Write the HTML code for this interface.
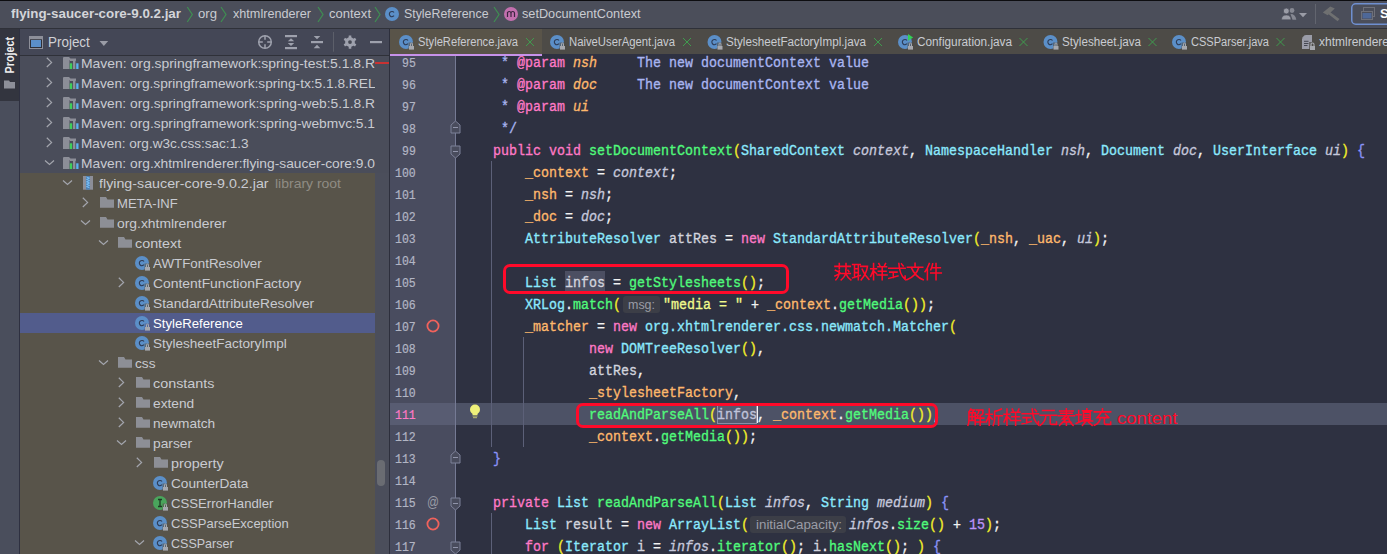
<!DOCTYPE html><html><head><meta charset="utf-8"><style>
*{margin:0;padding:0;box-sizing:border-box}
html,body{width:1387px;height:554px;overflow:hidden;background:#2e3141}
.a{position:absolute;white-space:pre}
.m{-webkit-text-stroke:0.3px currentColor}
svg.a{overflow:visible}
</style></head><body>
<div class="a" style="left:0px;top:0px;width:1387px;height:1px;background:#0d0d10;"></div>
<div class="a" style="left:0px;top:1px;width:1387px;height:27px;background:#4b4e5a;"></div>
<div class="a" style="left:0px;top:28px;width:1387px;height:1px;background:#2f3139;"></div>
<div class="a" style="left:0px;top:29px;width:19px;height:525px;background:#4a4e5c;"></div>
<div class="a" style="left:0px;top:29px;width:19px;height:72px;background:#33353f;"></div>
<div class="a" style="left:19px;top:29px;width:1px;height:525px;background:#2e3040;"></div>
<div class="a" style="left:20px;top:29px;width:369px;height:26px;background:#444756;"></div>
<div class="a" style="left:20px;top:55px;width:369px;height:1px;background:#2f3139;"></div>
<div class="a" style="left:20px;top:56px;width:369px;height:117px;background:#4a4d5a;"></div>
<div class="a" style="left:20px;top:173px;width:355px;height:381px;background:#58544a;"></div>
<div class="a" style="left:375px;top:173px;width:14px;height:381px;background:#4b4e5b;"></div>
<div class="a" style="left:389px;top:29px;width:1px;height:525px;background:#2d2f3c;"></div>
<div class="a" style="left:390px;top:29px;width:997px;height:25px;background:#4d4b47;"></div>
<div class="a" style="left:390px;top:29px;width:152px;height:25px;background:#595449;"></div>
<div class="a" style="left:390px;top:54px;width:152px;height:2px;background:#c792ea;"></div>
<div class="a" style="left:542px;top:54px;width:845px;height:2px;background:#2e3141;"></div>
<div class="a" style="left:390px;top:56px;width:65px;height:498px;background:#494c5f;"></div>
<div class="a" style="left:455px;top:56px;width:1px;height:498px;background:#757a94;"></div>
<div class="a" style="left:377px;top:460px;width:8px;height:26px;background:#6a6c72;border-radius:4px;"></div>
<div class="a" style="left:375px;top:62px;width:14px;height:2px;background:#c83232;"></div>
<div class="a" style="left:390px;top:403px;width:65px;height:22px;background:#585c72;"></div>
<div class="a" style="left:456px;top:403px;width:931px;height:22px;background:#4d5266;"></div>
<svg class="a" style="left:0;top:0" width="1387" height="554"><path d="M187.3,7 L192.3,14.5 L187.3,22" fill="none" stroke="#3f8f52" stroke-width="1.2"/><path d="M221,7 L226,14.5 L221,22" fill="none" stroke="#3f8f52" stroke-width="1.2"/><path d="M318,7 L323,14.5 L318,22" fill="none" stroke="#3f8f52" stroke-width="1.2"/><path d="M375,7 L380,14.5 L375,22" fill="none" stroke="#3f8f52" stroke-width="1.2"/><path d="M494,7 L499,14.5 L494,22" fill="none" stroke="#3f8f52" stroke-width="1.2"/><circle cx="392" cy="14" r="7" fill="#5b8fc8"/><path d="M394,12.5 A2.6,2.6 0 1 0 394,15.7" fill="none" stroke="#2f3d58" stroke-width="1.15"/><circle cx="511" cy="14" r="7" fill="#c26fae"/><path d="M507.5,17 V12 M507.5,13.5 Q507.5,11.5 509.2,11.5 Q511,11.5 511,13.5 V17 M511,13.5 Q511,11.5 512.8,11.5 Q514.5,11.5 514.5,13.5 V17" fill="none" stroke="#3b2540" stroke-width="1.2"/><g fill="#9a9ca6"><circle cx="1292" cy="10.5" r="2.4" opacity="0.75"/><path d="M1290.5,14 Q1295.5,14 1296.3,19.8 L1292.5,19.8 Z" opacity="0.75"/><circle cx="1286.3" cy="11" r="3" stroke="#4b4e5a" stroke-width="0.8"/><path d="M1281.5,19.8 Q1281.5,15 1286.3,15 Q1291,15 1291,19.8 Z" stroke="#4b4e5a" stroke-width="0.6"/><path d="M1299,13 H1307 L1303,17.3 Z"/></g><rect x="1315" y="4" width="1" height="20" fill="#62656f"/><g fill="#6f7071"><path d="M1322.8,12.6 L1330.3,6.6 L1334.8,8.4 L1327.6,15.2 Z"/><path d="M1329.3,11.6 L1339.5,19 L1337.6,21.2 L1327.6,13.4 Z"/></g><rect x="1351.75" y="3.75" width="60" height="20.5" rx="4" fill="none" stroke="#6f8fd0" stroke-width="1.5"/><g><rect x="1363.5" y="7.5" width="11" height="9" fill="none" stroke="#6e7079" stroke-width="1"/><rect x="1361" y="11" width="12" height="9" fill="#4c4f5a"/><rect x="1361.5" y="11.5" width="11" height="8" fill="none" stroke="#6e7079" stroke-width="1"/><rect x="1362.5" y="13" width="9" height="5.5" fill="#4e6898"/></g><text x="0" y="0" transform="translate(14,73.4) rotate(-90)" font-family="Liberation Sans" font-weight="bold" font-size="12" fill="#eeeeee" textLength="36.4" lengthAdjust="spacingAndGlyphs">Project</text><path d="M4,80.5 H9 L10,82 H15 V88.5 H4 Z" fill="#8d8f99"/><rect x="29" y="36" width="14" height="13" fill="#8d8f99"/><rect x="30" y="39.3" width="12" height="8.7" fill="#2e3038"/><rect x="31" y="40" width="10" height="7" fill="#5b8fc9"/><path d="M99.5,41 H108.2 L103.85,45.9 Z" fill="#9a9ca6"/><g stroke="#9ea1ad" stroke-width="1.5" fill="none"><circle cx="265" cy="42" r="6.3"/><path d="M265,35.7 V39.8 M265,44.2 V48.3 M258.7,42 H262.8 M267.2,42 H271.3"/></g><g fill="#9ea1ad"><rect x="285" y="35" width="12" height="2.2"/><rect x="285" y="47" width="12" height="2.2"/><path d="M287.8,41.2 L291,38.2 L294.2,41.2 Z M287.8,43 L291,46 L294.2,43 Z"/></g><g fill="#9ea1ad"><rect x="311" y="41" width="12" height="2.2"/><path d="M313.7,36 H320.3 L317,39.2 Z M313.7,48.2 H320.3 L317,44.8 Z"/></g><rect x="333" y="32" width="1" height="19.7" fill="#5c5f6a"/><g fill="#9ea1ad"><circle cx="350" cy="42.1" r="4.9"/><g stroke="#9ea1ad" stroke-width="2.6"><path d="M350,35.5 V48.7 M344.3,38.8 L355.7,45.4 M344.3,45.4 L355.7,38.8"/></g><circle cx="350" cy="42.1" r="1.9" fill="#454853"/></g><rect x="370" y="41" width="12" height="2.2" fill="#9ea1ad"/><circle cx="406" cy="42" r="7" fill="#5b8fc8"/><path d="M408,40.5 A2.6,2.6 0 1 0 408,43.7" fill="none" stroke="#2f3d58" stroke-width="1.15"/><rect x="408.5" y="42.5" width="6" height="7" fill="#595449" opacity="0.6"/><path d="M410.5,46 V44 A1,1 0 0 1 412.5,44 V46" fill="none" stroke="#a6a8ae" stroke-width="1"/><rect x="409" y="46" width="5" height="3.6" fill="#a6a8ae"/><circle cx="557" cy="42" r="7" fill="#5b8fc8"/><path d="M559,40.5 A2.6,2.6 0 1 0 559,43.7" fill="none" stroke="#2f3d58" stroke-width="1.15"/><rect x="559.5" y="42.5" width="6" height="7" fill="#4d4b47" opacity="0.6"/><path d="M561.5,46 V44 A1,1 0 0 1 563.5,44 V46" fill="none" stroke="#a6a8ae" stroke-width="1"/><rect x="560" y="46" width="5" height="3.6" fill="#a6a8ae"/><circle cx="714.5" cy="42" r="7" fill="#5b8fc8"/><path d="M716.5,40.5 A2.6,2.6 0 1 0 716.5,43.7" fill="none" stroke="#2f3d58" stroke-width="1.15"/><rect x="717.0" y="42.5" width="6" height="7" fill="#4d4b47" opacity="0.6"/><path d="M719.0,46 V44 A1,1 0 0 1 721.0,44 V46" fill="none" stroke="#a6a8ae" stroke-width="1"/><rect x="717.5" y="46" width="5" height="3.6" fill="#a6a8ae"/><circle cx="905" cy="42" r="7" fill="#5b8fc8"/><path d="M907,40.5 A2.6,2.6 0 1 0 907,43.7" fill="none" stroke="#2f3d58" stroke-width="1.15"/><rect x="907.5" y="42.5" width="6" height="7" fill="#4d4b47" opacity="0.6"/><path d="M909.5,46 V44 A1,1 0 0 1 911.5,44 V46" fill="none" stroke="#a6a8ae" stroke-width="1"/><rect x="908" y="46" width="5" height="3.6" fill="#a6a8ae"/><circle cx="1050.5" cy="42" r="7" fill="#5b8fc8"/><path d="M1052.5,40.5 A2.6,2.6 0 1 0 1052.5,43.7" fill="none" stroke="#2f3d58" stroke-width="1.15"/><rect x="1053.0" y="42.5" width="6" height="7" fill="#4d4b47" opacity="0.6"/><path d="M1055.0,46 V44 A1,1 0 0 1 1057.0,44 V46" fill="none" stroke="#a6a8ae" stroke-width="1"/><rect x="1053.5" y="46" width="5" height="3.6" fill="#a6a8ae"/><circle cx="1179" cy="42" r="7" fill="#5b8fc8"/><path d="M1181,40.5 A2.6,2.6 0 1 0 1181,43.7" fill="none" stroke="#2f3d58" stroke-width="1.15"/><rect x="1181.5" y="42.5" width="6" height="7" fill="#4d4b47" opacity="0.6"/><path d="M1183.5,46 V44 A1,1 0 0 1 1185.5,44 V46" fill="none" stroke="#a6a8ae" stroke-width="1"/><rect x="1182" y="46" width="5" height="3.6" fill="#a6a8ae"/><path d="M908,33.9 L913.2,37.4 L908,40.8 Z" fill="#33d155"/><path d="M526,38 L534,46 M534,38 L526,46" stroke="#3f9c4e" stroke-width="1"/><path d="M683,38 L691,46 M691,38 L683,46" stroke="#3f9c4e" stroke-width="1"/><path d="M874,38 L882,46 M882,38 L874,46" stroke="#3f9c4e" stroke-width="1"/><path d="M1019.5,38 L1027.5,46 M1027.5,38 L1019.5,46" stroke="#3f9c4e" stroke-width="1"/><path d="M1148.5,38 L1156.5,46 M1156.5,38 L1148.5,46" stroke="#3f9c4e" stroke-width="1"/><path d="M1276.5,38 L1284.5,46 M1284.5,38 L1276.5,46" stroke="#3f9c4e" stroke-width="1"/><path d="M1305.5,35 H1312 V49 H1302 V38.5 Z" fill="#9a9ca8"/><path d="M1302,37.8 L1305,35 V38 Z" fill="#9a9ca8"/><path d="M1304,41.3 H1308.5 M1304,43.5 H1308.5 M1304,45.5 H1307.5" stroke="#3c3e48" stroke-width="0.9"/><rect x="1309" y="42" width="7" height="9" fill="#4d4b47" opacity="0.7"/><path d="M1311,46 V44.5 A1.5,1.5 0 0 1 1314,44.5 V46" fill="none" stroke="#a6a8ae" stroke-width="1.1"/><rect x="1310" y="46" width="5" height="4" fill="#a6a8ae"/><path d="M455.5,121 L460.0,125 V133 H451.0 V125 Z" fill="#494c5d" stroke="#7d8199" stroke-width="1"/><path d="M453.0,127.5 H458.0" stroke="#9094aa" stroke-width="1"/><path d="M451.0,146 H460.0 V154 L455.5,158 L451.0,154 Z" fill="#494c5d" stroke="#7d8199" stroke-width="1"/><path d="M453.0,151.5 H458.0" stroke="#9094aa" stroke-width="1"/><path d="M455.5,451 L460.0,455 V463 H451.0 V455 Z" fill="#494c5d" stroke="#7d8199" stroke-width="1"/><path d="M453.0,457.5 H458.0" stroke="#9094aa" stroke-width="1"/><path d="M451.0,498 H460.0 V506 L455.5,510 L451.0,506 Z" fill="#494c5d" stroke="#7d8199" stroke-width="1"/><path d="M453.0,503.5 H458.0" stroke="#9094aa" stroke-width="1"/><path d="M451.0,542 H460.0 V550 L455.5,554 L451.0,550 Z" fill="#494c5d" stroke="#7d8199" stroke-width="1"/><path d="M453.0,547.5 H458.0" stroke="#9094aa" stroke-width="1"/><circle cx="433" cy="326" r="5.6" fill="none" stroke="#f0625c" stroke-width="1.8"/><circle cx="433" cy="524" r="5.6" fill="none" stroke="#f0625c" stroke-width="1.8"/><text x="427" y="507" font-family="Liberation Sans" font-size="14" fill="#9a9ca6" textLength="12" lengthAdjust="spacingAndGlyphs">@</text><g fill="#eef07a"><circle cx="475" cy="409.5" r="5"/><rect x="472.5" y="412" width="5" height="3"/></g><path d="M472.5,416 H477.5 M473,417.7 H477" stroke="#c8ca70" stroke-width="0.9"/><rect x="491" y="161" width="1" height="286" fill="#5c6078"/><rect x="523" y="337" width="1" height="110" fill="#5c6078"/><rect x="491" y="513" width="1" height="41" fill="#5c6078"/></svg>
<div class="a" style="left:11.00px;top:6.87px;font-family:'Liberation Sans';font-size:13.5px;line-height:13.5px;color:#d4d5d9;font-weight:bold;transform:scale(0.9894,1.0);transform-origin:0 11.43px;">flying-saucer-core-9.0.2.jar</div>
<div class="a" style="left:197.50px;top:6.87px;font-family:'Liberation Sans';font-size:13.5px;line-height:13.5px;color:#c9cbd1;font-weight:normal;transform:scale(0.9738,1.0);transform-origin:0 11.43px;">org</div>
<div class="a" style="left:233.00px;top:6.87px;font-family:'Liberation Sans';font-size:13.5px;line-height:13.5px;color:#c9cbd1;font-weight:normal;transform:scale(0.9366,1.0);transform-origin:0 11.43px;">xhtmlrenderer</div>
<div class="a" style="left:329.00px;top:6.87px;font-family:'Liberation Sans';font-size:13.5px;line-height:13.5px;color:#c9cbd1;font-weight:normal;transform:scale(0.9649,1.0);transform-origin:0 11.43px;">context</div>
<div class="a" style="left:403.50px;top:6.87px;font-family:'Liberation Sans';font-size:13.5px;line-height:13.5px;color:#c9cbd1;font-weight:normal;transform:scale(0.9155,1.0);transform-origin:0 11.43px;">StyleReference</div>
<div class="a" style="left:522.00px;top:6.87px;font-family:'Liberation Sans';font-size:13.5px;line-height:13.5px;color:#c9cbd1;font-weight:normal;transform:scale(0.9408,1.0);transform-origin:0 11.43px;">setDocumentContext</div>
<div class="a" style="left:1380.00px;top:6.99px;font-family:'Liberation Sans';font-size:13px;line-height:13px;color:#ffffff;font-weight:bold;">S</div>
<div class="a" style="left:48.40px;top:34.89px;font-family:'Liberation Sans';font-size:14.3px;line-height:14.3px;color:#d0d1d5;font-weight:normal;transform:scale(0.9394,1.0);transform-origin:0 12.11px;">Project</div>
<div class="a" style="left:20px;top:56px;width:355px;height:498px;overflow:hidden;">
<div class="a" style="left:0px;top:257px;width:356px;height:20px;background:#525c8c;"></div>
<div class="a" style="left:61.00px;top:0.65px;font-family:'Liberation Sans';font-size:13.4px;line-height:13.4px;color:#c9cbd1;font-weight:normal;transform:scale(1.0396,1.0);transform-origin:0 11.35px;">Maven: org.springframework:spring-test:5.1.8.RELEASE</div>
<div class="a" style="left:61.00px;top:20.65px;font-family:'Liberation Sans';font-size:13.4px;line-height:13.4px;color:#c9cbd1;font-weight:normal;transform:scale(1.0225,1.0);transform-origin:0 11.35px;">Maven: org.springframework:spring-tx:5.1.8.RELEASE</div>
<div class="a" style="left:61.00px;top:40.65px;font-family:'Liberation Sans';font-size:13.4px;line-height:13.4px;color:#c9cbd1;font-weight:normal;transform:scale(1.0287,1.0);transform-origin:0 11.35px;">Maven: org.springframework:spring-web:5.1.8.RELEASE</div>
<div class="a" style="left:61.00px;top:60.65px;font-family:'Liberation Sans';font-size:13.4px;line-height:13.4px;color:#c9cbd1;font-weight:normal;transform:scale(1.0288,1.0);transform-origin:0 11.35px;">Maven: org.springframework:spring-webmvc:5.1.8.RELEASE</div>
<div class="a" style="left:61.00px;top:80.65px;font-family:'Liberation Sans';font-size:13.4px;line-height:13.4px;color:#c9cbd1;font-weight:normal;transform:scale(1.0138,1.0);transform-origin:0 11.35px;">Maven: org.w3c.css:sac:1.3</div>
<div class="a" style="left:61.00px;top:100.65px;font-family:'Liberation Sans';font-size:13.4px;line-height:13.4px;color:#c9cbd1;font-weight:normal;transform:scale(1.0287,1.0);transform-origin:0 11.35px;">Maven: org.xhtmlrenderer:flying-saucer-core:9.0.2</div>
<div class="a" style="left:79.00px;top:120.65px;font-family:'Liberation Sans';font-size:13.4px;line-height:13.4px;color:#c9cbd1;font-weight:normal;transform:scale(1.0649,1.0);transform-origin:0 11.35px;">flying-saucer-core-9.0.2.jar</div>
<div class="a" style="left:255.00px;top:120.65px;font-family:'Liberation Sans';font-size:13.4px;line-height:13.4px;color:#8f8c84;font-weight:normal;transform:scale(1.0434,1.0);transform-origin:0 11.35px;">library root</div>
<div class="a" style="left:97.00px;top:140.65px;font-family:'Liberation Sans';font-size:13.4px;line-height:13.4px;color:#c9cbd1;font-weight:normal;transform:scale(0.9754,1.0);transform-origin:0 11.35px;">META-INF</div>
<div class="a" style="left:97.00px;top:160.65px;font-family:'Liberation Sans';font-size:13.4px;line-height:13.4px;color:#c9cbd1;font-weight:normal;transform:scale(1.0352,1.0);transform-origin:0 11.35px;">org.xhtmlrenderer</div>
<div class="a" style="left:115.00px;top:180.65px;font-family:'Liberation Sans';font-size:13.4px;line-height:13.4px;color:#c9cbd1;font-weight:normal;transform:scale(1.0701,1.0);transform-origin:0 11.35px;">context</div>
<div class="a" style="left:133.00px;top:200.65px;font-family:'Liberation Sans';font-size:13.4px;line-height:13.4px;color:#c9cbd1;font-weight:normal;transform:scale(0.9983,1.0);transform-origin:0 11.35px;">AWTFontResolver</div>
<div class="a" style="left:133.00px;top:220.65px;font-family:'Liberation Sans';font-size:13.4px;line-height:13.4px;color:#c9cbd1;font-weight:normal;transform:scale(1.0371,1.0);transform-origin:0 11.35px;">ContentFunctionFactory</div>
<div class="a" style="left:133.00px;top:240.65px;font-family:'Liberation Sans';font-size:13.4px;line-height:13.4px;color:#c9cbd1;font-weight:normal;transform:scale(1.0264,1.0);transform-origin:0 11.35px;">StandardAttributeResolver</div>
<div class="a" style="left:133.00px;top:260.65px;font-family:'Liberation Sans';font-size:13.4px;line-height:13.4px;color:#ffffff;font-weight:normal;transform:scale(0.9820,1.0);transform-origin:0 11.35px;">StyleReference</div>
<div class="a" style="left:133.00px;top:280.65px;font-family:'Liberation Sans';font-size:13.4px;line-height:13.4px;color:#c9cbd1;font-weight:normal;transform:scale(1.0101,1.0);transform-origin:0 11.35px;">StylesheetFactoryImpl</div>
<div class="a" style="left:115.00px;top:300.65px;font-family:'Liberation Sans';font-size:13.4px;line-height:13.4px;color:#c9cbd1;font-weight:normal;transform:scale(1.0206,1.0);transform-origin:0 11.35px;">css</div>
<div class="a" style="left:133.00px;top:320.65px;font-family:'Liberation Sans';font-size:13.4px;line-height:13.4px;color:#c9cbd1;font-weight:normal;transform:scale(1.0713,1.0);transform-origin:0 11.35px;">constants</div>
<div class="a" style="left:133.00px;top:340.65px;font-family:'Liberation Sans';font-size:13.4px;line-height:13.4px;color:#c9cbd1;font-weight:normal;transform:scale(1.0248,1.0);transform-origin:0 11.35px;">extend</div>
<div class="a" style="left:133.00px;top:360.65px;font-family:'Liberation Sans';font-size:13.4px;line-height:13.4px;color:#c9cbd1;font-weight:normal;transform:scale(1.0192,1.0);transform-origin:0 11.35px;">newmatch</div>
<div class="a" style="left:133.00px;top:380.65px;font-family:'Liberation Sans';font-size:13.4px;line-height:13.4px;color:#c9cbd1;font-weight:normal;transform:scale(1.0275,1.0);transform-origin:0 11.35px;">parser</div>
<div class="a" style="left:151.00px;top:400.65px;font-family:'Liberation Sans';font-size:13.4px;line-height:13.4px;color:#c9cbd1;font-weight:normal;transform:scale(1.0728,1.0);transform-origin:0 11.35px;">property</div>
<div class="a" style="left:151.00px;top:420.65px;font-family:'Liberation Sans';font-size:13.4px;line-height:13.4px;color:#c9cbd1;font-weight:normal;transform:scale(1.0181,1.0);transform-origin:0 11.35px;">CounterData</div>
<div class="a" style="left:151.00px;top:440.65px;font-family:'Liberation Sans';font-size:13.4px;line-height:13.4px;color:#c9cbd1;font-weight:normal;transform:scale(0.9829,1.0);transform-origin:0 11.35px;">CSSErrorHandler</div>
<div class="a" style="left:151.00px;top:460.65px;font-family:'Liberation Sans';font-size:13.4px;line-height:13.4px;color:#c9cbd1;font-weight:normal;transform:scale(0.9710,1.0);transform-origin:0 11.35px;">CSSParseException</div>
<div class="a" style="left:151.00px;top:480.65px;font-family:'Liberation Sans';font-size:13.4px;line-height:13.4px;color:#c9cbd1;font-weight:normal;transform:scale(0.9347,1.0);transform-origin:0 11.35px;">CSSParser</div>
<svg class="a" style="left:-20px;top:-56px" width="1387" height="554"><path d="M46.8,57.8 L51.6,62.4 L46.8,67" fill="none" stroke="#a3a5ad" stroke-width="1.2"/><path d="M63,58 Q63,57 64,57 H69 L70.5,58.5 H76 V69 H63 Z" fill="#8c8e98"/><rect x="69.5" y="60" width="9" height="9" fill="#4a4d5a"/><rect x="69.8" y="63.3" width="2.4" height="5.7" fill="#3fce5a"/><rect x="73" y="60" width="2.4" height="9" fill="#8c8e98"/><rect x="76.2" y="63.3" width="2.3" height="5.7" fill="#5ab2f2"/><rect x="69.8" y="60" width="6" height="1" fill="#8c8e98"/><path d="M46.8,77.8 L51.6,82.4 L46.8,87" fill="none" stroke="#a3a5ad" stroke-width="1.2"/><path d="M63,78 Q63,77 64,77 H69 L70.5,78.5 H76 V89 H63 Z" fill="#8c8e98"/><rect x="69.5" y="80" width="9" height="9" fill="#4a4d5a"/><rect x="69.8" y="83.3" width="2.4" height="5.7" fill="#3fce5a"/><rect x="73" y="80" width="2.4" height="9" fill="#8c8e98"/><rect x="76.2" y="83.3" width="2.3" height="5.7" fill="#5ab2f2"/><rect x="69.8" y="80" width="6" height="1" fill="#8c8e98"/><path d="M46.8,97.8 L51.6,102.4 L46.8,107" fill="none" stroke="#a3a5ad" stroke-width="1.2"/><path d="M63,98 Q63,97 64,97 H69 L70.5,98.5 H76 V109 H63 Z" fill="#8c8e98"/><rect x="69.5" y="100" width="9" height="9" fill="#4a4d5a"/><rect x="69.8" y="103.3" width="2.4" height="5.7" fill="#3fce5a"/><rect x="73" y="100" width="2.4" height="9" fill="#8c8e98"/><rect x="76.2" y="103.3" width="2.3" height="5.7" fill="#5ab2f2"/><rect x="69.8" y="100" width="6" height="1" fill="#8c8e98"/><path d="M46.8,117.8 L51.6,122.4 L46.8,127" fill="none" stroke="#a3a5ad" stroke-width="1.2"/><path d="M63,118 Q63,117 64,117 H69 L70.5,118.5 H76 V129 H63 Z" fill="#8c8e98"/><rect x="69.5" y="120" width="9" height="9" fill="#4a4d5a"/><rect x="69.8" y="123.3" width="2.4" height="5.7" fill="#3fce5a"/><rect x="73" y="120" width="2.4" height="9" fill="#8c8e98"/><rect x="76.2" y="123.3" width="2.3" height="5.7" fill="#5ab2f2"/><rect x="69.8" y="120" width="6" height="1" fill="#8c8e98"/><path d="M46.8,137.8 L51.6,142.4 L46.8,147" fill="none" stroke="#a3a5ad" stroke-width="1.2"/><path d="M63,138 Q63,137 64,137 H69 L70.5,138.5 H76 V149 H63 Z" fill="#8c8e98"/><rect x="69.5" y="140" width="9" height="9" fill="#4a4d5a"/><rect x="69.8" y="143.3" width="2.4" height="5.7" fill="#3fce5a"/><rect x="73" y="140" width="2.4" height="9" fill="#8c8e98"/><rect x="76.2" y="143.3" width="2.3" height="5.7" fill="#5ab2f2"/><rect x="69.8" y="140" width="6" height="1" fill="#8c8e98"/><path d="M45,160.5 L49.5,164.5 L54,160.5" fill="none" stroke="#a3a5ad" stroke-width="1.2"/><path d="M63,158 Q63,157 64,157 H69 L70.5,158.5 H76 V169 H63 Z" fill="#8c8e98"/><rect x="69.5" y="160" width="9" height="9" fill="#4a4d5a"/><rect x="69.8" y="163.3" width="2.4" height="5.7" fill="#3fce5a"/><rect x="73" y="160" width="2.4" height="9" fill="#8c8e98"/><rect x="76.2" y="163.3" width="2.3" height="5.7" fill="#5ab2f2"/><rect x="69.8" y="160" width="6" height="1" fill="#8c8e98"/><path d="M63,180.5 L67.5,184.5 L72,180.5" fill="none" stroke="#a3a5ad" stroke-width="1.2"/><rect x="83" y="176" width="10" height="13.7" fill="#8c8e98"/><rect x="86" y="176" width="4" height="13.7" fill="#4f7fb0"/><path d="M86.5,177 L89.5,178.2 L86.5,179.4 L89.5,180.6 L86.5,181.8 L89.5,183 L86.5,184.2 L89.5,185.4 L86.5,186.6 L89.5,187.8" fill="none" stroke="#7cc6ff" stroke-width="0.9"/><path d="M82.8,197.8 L87.6,202.4 L82.8,207" fill="none" stroke="#a3a5ad" stroke-width="1.2"/><path d="M100,197 H106 L107.5,199.5 H114 V207.8 H100 Z" fill="#8d8f96"/><path d="M81,220.5 L85.5,224.5 L90,220.5" fill="none" stroke="#a3a5ad" stroke-width="1.2"/><path d="M100,217 H106 L107.5,219.5 H114 V227.8 H100 Z" fill="#8d8f96"/><path d="M99,240.5 L103.5,244.5 L108,240.5" fill="none" stroke="#a3a5ad" stroke-width="1.2"/><path d="M118,237 H124 L125.5,239.5 H132 V247.8 H118 Z" fill="#8d8f96"/><circle cx="142" cy="263" r="7" fill="#5b8fc8"/><path d="M144,261.5 A2.6,2.6 0 1 0 144,264.7" fill="none" stroke="#2f3d58" stroke-width="1.15"/><rect x="144.5" y="263.5" width="6" height="7" fill="#58544a" opacity="0.6"/><path d="M146.5,267 V265 A1,1 0 0 1 148.5,265 V267" fill="none" stroke="#a6a8ae" stroke-width="1"/><rect x="145" y="267" width="5" height="3.6" fill="#a6a8ae"/><path d="M118.8,277.8 L123.6,282.4 L118.8,287" fill="none" stroke="#a3a5ad" stroke-width="1.2"/><circle cx="142" cy="283" r="7" fill="#5b8fc8"/><path d="M144,281.5 A2.6,2.6 0 1 0 144,284.7" fill="none" stroke="#2f3d58" stroke-width="1.15"/><rect x="144.5" y="283.5" width="6" height="7" fill="#58544a" opacity="0.6"/><path d="M146.5,287 V285 A1,1 0 0 1 148.5,285 V287" fill="none" stroke="#a6a8ae" stroke-width="1"/><rect x="145" y="287" width="5" height="3.6" fill="#a6a8ae"/><circle cx="142" cy="303" r="7" fill="#5b8fc8"/><path d="M144,301.5 A2.6,2.6 0 1 0 144,304.7" fill="none" stroke="#2f3d58" stroke-width="1.15"/><rect x="144.5" y="303.5" width="6" height="7" fill="#58544a" opacity="0.6"/><path d="M146.5,307 V305 A1,1 0 0 1 148.5,305 V307" fill="none" stroke="#a6a8ae" stroke-width="1"/><rect x="145" y="307" width="5" height="3.6" fill="#a6a8ae"/><circle cx="142" cy="323" r="7" fill="#5b8fc8"/><path d="M144,321.5 A2.6,2.6 0 1 0 144,324.7" fill="none" stroke="#2f3d58" stroke-width="1.15"/><rect x="144.5" y="323.5" width="6" height="7" fill="#525c8c" opacity="0.6"/><path d="M146.5,327 V325 A1,1 0 0 1 148.5,325 V327" fill="none" stroke="#a6a8ae" stroke-width="1"/><rect x="145" y="327" width="5" height="3.6" fill="#a6a8ae"/><circle cx="142" cy="343" r="7" fill="#5b8fc8"/><path d="M144,341.5 A2.6,2.6 0 1 0 144,344.7" fill="none" stroke="#2f3d58" stroke-width="1.15"/><rect x="144.5" y="343.5" width="6" height="7" fill="#58544a" opacity="0.6"/><path d="M146.5,347 V345 A1,1 0 0 1 148.5,345 V347" fill="none" stroke="#a6a8ae" stroke-width="1"/><rect x="145" y="347" width="5" height="3.6" fill="#a6a8ae"/><path d="M99,360.5 L103.5,364.5 L108,360.5" fill="none" stroke="#a3a5ad" stroke-width="1.2"/><path d="M118,357 H124 L125.5,359.5 H132 V367.8 H118 Z" fill="#8d8f96"/><path d="M118.8,377.8 L123.6,382.4 L118.8,387" fill="none" stroke="#a3a5ad" stroke-width="1.2"/><path d="M136,377 H142 L143.5,379.5 H150 V387.8 H136 Z" fill="#8d8f96"/><path d="M118.8,397.8 L123.6,402.4 L118.8,407" fill="none" stroke="#a3a5ad" stroke-width="1.2"/><path d="M136,397 H142 L143.5,399.5 H150 V407.8 H136 Z" fill="#8d8f96"/><path d="M118.8,417.8 L123.6,422.4 L118.8,427" fill="none" stroke="#a3a5ad" stroke-width="1.2"/><path d="M136,417 H142 L143.5,419.5 H150 V427.8 H136 Z" fill="#8d8f96"/><path d="M117,440.5 L121.5,444.5 L126,440.5" fill="none" stroke="#a3a5ad" stroke-width="1.2"/><path d="M136,437 H142 L143.5,439.5 H150 V447.8 H136 Z" fill="#8d8f96"/><path d="M136.8,457.8 L141.6,462.4 L136.8,467" fill="none" stroke="#a3a5ad" stroke-width="1.2"/><path d="M154,457 H160 L161.5,459.5 H168 V467.8 H154 Z" fill="#8d8f96"/><circle cx="160" cy="483" r="7" fill="#5b8fc8"/><path d="M162,481.5 A2.6,2.6 0 1 0 162,484.7" fill="none" stroke="#2f3d58" stroke-width="1.15"/><rect x="162.5" y="483.5" width="6" height="7" fill="#58544a" opacity="0.6"/><path d="M164.5,487 V485 A1,1 0 0 1 166.5,485 V487" fill="none" stroke="#a6a8ae" stroke-width="1"/><rect x="163" y="487" width="5" height="3.6" fill="#a6a8ae"/><circle cx="160" cy="503" r="7" fill="#4aa55c"/><path d="M158,499.5 H162 M160,499.5 V506.5 M158,506.5 H162" fill="none" stroke="#1f3a25" stroke-width="1.3"/><rect x="162.5" y="503.5" width="6" height="7" fill="#58544a" opacity="0.6"/><path d="M164.5,507 V505 A1,1 0 0 1 166.5,505 V507" fill="none" stroke="#a6a8ae" stroke-width="1"/><rect x="163" y="507" width="5" height="3.6" fill="#a6a8ae"/><circle cx="160" cy="523" r="7" fill="#5b8fc8"/><path d="M162,521.5 A2.6,2.6 0 1 0 162,524.7" fill="none" stroke="#2f3d58" stroke-width="1.15"/><rect x="162.5" y="523.5" width="6" height="7" fill="#58544a" opacity="0.6"/><path d="M164.5,527 V525 A1,1 0 0 1 166.5,525 V527" fill="none" stroke="#a6a8ae" stroke-width="1"/><rect x="163" y="527" width="5" height="3.6" fill="#a6a8ae"/><path d="M135,540.5 L139.5,544.5 L144,540.5" fill="none" stroke="#a3a5ad" stroke-width="1.2"/><circle cx="160" cy="543" r="7" fill="#5b8fc8"/><path d="M162,541.5 A2.6,2.6 0 1 0 162,544.7" fill="none" stroke="#2f3d58" stroke-width="1.15"/><rect x="162.5" y="543.5" width="6" height="7" fill="#58544a" opacity="0.6"/><path d="M164.5,547 V545 A1,1 0 0 1 166.5,545 V547" fill="none" stroke="#a6a8ae" stroke-width="1"/><rect x="163" y="547" width="5" height="3.6" fill="#a6a8ae"/></svg>
</div>
<div class="a" style="left:418.00px;top:35.84px;font-family:'Liberation Sans';font-size:12px;line-height:12px;color:#c9cbd1;font-weight:normal;transform:scale(0.9312,1.0);transform-origin:0 10.16px;">StyleReference.java</div>
<div class="a" style="left:569.00px;top:35.84px;font-family:'Liberation Sans';font-size:12px;line-height:12px;color:#c9cbd1;font-weight:normal;transform:scale(0.9404,1.0);transform-origin:0 10.16px;">NaiveUserAgent.java</div>
<div class="a" style="left:726.00px;top:35.84px;font-family:'Liberation Sans';font-size:12px;line-height:12px;color:#c9cbd1;font-weight:normal;transform:scale(0.9718,1.0);transform-origin:0 10.16px;">StylesheetFactoryImpl.java</div>
<div class="a" style="left:917.00px;top:35.84px;font-family:'Liberation Sans';font-size:12px;line-height:12px;color:#c9cbd1;font-weight:normal;transform:scale(0.9822,1.0);transform-origin:0 10.16px;">Configuration.java</div>
<div class="a" style="left:1062.00px;top:35.84px;font-family:'Liberation Sans';font-size:12px;line-height:12px;color:#c9cbd1;font-weight:normal;transform:scale(0.9707,1.0);transform-origin:0 10.16px;">Stylesheet.java</div>
<div class="a" style="left:1191.00px;top:35.84px;font-family:'Liberation Sans';font-size:12px;line-height:12px;color:#c9cbd1;font-weight:normal;transform:scale(0.9209,1.0);transform-origin:0 10.16px;">CSSParser.java</div>
<div class="a" style="left:1319.00px;top:35.84px;font-family:'Liberation Sans';font-size:12px;line-height:12px;color:#c9cbd1;font-weight:normal;">xhtmlrenderer.iml</div>
<div class="a" style="left:401.70px;top:57.92px;font-family:'Liberation Mono';font-size:12.5px;line-height:12.5px;color:#b2b5c4;font-weight:normal;transform:scale(0.9199,1.0);transform-origin:0 9.58px;-webkit-text-stroke:0.2px currentColor;">95</div>
<div class="a" style="left:401.70px;top:79.92px;font-family:'Liberation Mono';font-size:12.5px;line-height:12.5px;color:#b2b5c4;font-weight:normal;transform:scale(0.9199,1.0);transform-origin:0 9.58px;-webkit-text-stroke:0.2px currentColor;">96</div>
<div class="a" style="left:401.70px;top:101.92px;font-family:'Liberation Mono';font-size:12.5px;line-height:12.5px;color:#b2b5c4;font-weight:normal;transform:scale(0.9199,1.0);transform-origin:0 9.58px;-webkit-text-stroke:0.2px currentColor;">97</div>
<div class="a" style="left:401.70px;top:123.92px;font-family:'Liberation Mono';font-size:12.5px;line-height:12.5px;color:#b2b5c4;font-weight:normal;transform:scale(0.9199,1.0);transform-origin:0 9.58px;-webkit-text-stroke:0.2px currentColor;">98</div>
<div class="a" style="left:401.70px;top:145.92px;font-family:'Liberation Mono';font-size:12.5px;line-height:12.5px;color:#b2b5c4;font-weight:normal;transform:scale(0.9199,1.0);transform-origin:0 9.58px;-webkit-text-stroke:0.2px currentColor;">99</div>
<div class="a" style="left:394.80px;top:167.92px;font-family:'Liberation Mono';font-size:12.5px;line-height:12.5px;color:#b2b5c4;font-weight:normal;transform:scale(0.9199,1.0);transform-origin:0 9.58px;-webkit-text-stroke:0.2px currentColor;">100</div>
<div class="a" style="left:394.80px;top:189.92px;font-family:'Liberation Mono';font-size:12.5px;line-height:12.5px;color:#b2b5c4;font-weight:normal;transform:scale(0.9199,1.0);transform-origin:0 9.58px;-webkit-text-stroke:0.2px currentColor;">101</div>
<div class="a" style="left:394.80px;top:211.92px;font-family:'Liberation Mono';font-size:12.5px;line-height:12.5px;color:#b2b5c4;font-weight:normal;transform:scale(0.9199,1.0);transform-origin:0 9.58px;-webkit-text-stroke:0.2px currentColor;">102</div>
<div class="a" style="left:394.80px;top:233.92px;font-family:'Liberation Mono';font-size:12.5px;line-height:12.5px;color:#b2b5c4;font-weight:normal;transform:scale(0.9199,1.0);transform-origin:0 9.58px;-webkit-text-stroke:0.2px currentColor;">103</div>
<div class="a" style="left:394.80px;top:255.92px;font-family:'Liberation Mono';font-size:12.5px;line-height:12.5px;color:#b2b5c4;font-weight:normal;transform:scale(0.9199,1.0);transform-origin:0 9.58px;-webkit-text-stroke:0.2px currentColor;">104</div>
<div class="a" style="left:394.80px;top:277.92px;font-family:'Liberation Mono';font-size:12.5px;line-height:12.5px;color:#b2b5c4;font-weight:normal;transform:scale(0.9199,1.0);transform-origin:0 9.58px;-webkit-text-stroke:0.2px currentColor;">105</div>
<div class="a" style="left:394.80px;top:299.92px;font-family:'Liberation Mono';font-size:12.5px;line-height:12.5px;color:#b2b5c4;font-weight:normal;transform:scale(0.9199,1.0);transform-origin:0 9.58px;-webkit-text-stroke:0.2px currentColor;">106</div>
<div class="a" style="left:394.80px;top:321.92px;font-family:'Liberation Mono';font-size:12.5px;line-height:12.5px;color:#b2b5c4;font-weight:normal;transform:scale(0.9199,1.0);transform-origin:0 9.58px;-webkit-text-stroke:0.2px currentColor;">107</div>
<div class="a" style="left:394.80px;top:343.92px;font-family:'Liberation Mono';font-size:12.5px;line-height:12.5px;color:#b2b5c4;font-weight:normal;transform:scale(0.9199,1.0);transform-origin:0 9.58px;-webkit-text-stroke:0.2px currentColor;">108</div>
<div class="a" style="left:394.80px;top:365.92px;font-family:'Liberation Mono';font-size:12.5px;line-height:12.5px;color:#b2b5c4;font-weight:normal;transform:scale(0.9199,1.0);transform-origin:0 9.58px;-webkit-text-stroke:0.2px currentColor;">109</div>
<div class="a" style="left:394.80px;top:387.92px;font-family:'Liberation Mono';font-size:12.5px;line-height:12.5px;color:#b2b5c4;font-weight:normal;transform:scale(0.9199,1.0);transform-origin:0 9.58px;-webkit-text-stroke:0.2px currentColor;">110</div>
<div class="a" style="left:394.80px;top:409.92px;font-family:'Liberation Mono';font-size:12.5px;line-height:12.5px;color:#ff79c6;font-weight:normal;transform:scale(0.9199,1.0);transform-origin:0 9.58px;-webkit-text-stroke:0.2px currentColor;">111</div>
<div class="a" style="left:394.80px;top:431.92px;font-family:'Liberation Mono';font-size:12.5px;line-height:12.5px;color:#b2b5c4;font-weight:normal;transform:scale(0.9199,1.0);transform-origin:0 9.58px;-webkit-text-stroke:0.2px currentColor;">112</div>
<div class="a" style="left:394.80px;top:453.92px;font-family:'Liberation Mono';font-size:12.5px;line-height:12.5px;color:#b2b5c4;font-weight:normal;transform:scale(0.9199,1.0);transform-origin:0 9.58px;-webkit-text-stroke:0.2px currentColor;">113</div>
<div class="a" style="left:394.80px;top:475.92px;font-family:'Liberation Mono';font-size:12.5px;line-height:12.5px;color:#b2b5c4;font-weight:normal;transform:scale(0.9199,1.0);transform-origin:0 9.58px;-webkit-text-stroke:0.2px currentColor;">114</div>
<div class="a" style="left:394.80px;top:497.92px;font-family:'Liberation Mono';font-size:12.5px;line-height:12.5px;color:#b2b5c4;font-weight:normal;transform:scale(0.9199,1.0);transform-origin:0 9.58px;-webkit-text-stroke:0.2px currentColor;">115</div>
<div class="a" style="left:394.80px;top:519.92px;font-family:'Liberation Mono';font-size:12.5px;line-height:12.5px;color:#b2b5c4;font-weight:normal;transform:scale(0.9199,1.0);transform-origin:0 9.58px;-webkit-text-stroke:0.2px currentColor;">116</div>
<div class="a" style="left:394.80px;top:541.92px;font-family:'Liberation Mono';font-size:12.5px;line-height:12.5px;color:#b2b5c4;font-weight:normal;transform:scale(0.9199,1.0);transform-origin:0 9.58px;-webkit-text-stroke:0.2px currentColor;">117</div>
<div class="a" style="left:565px;top:271px;width:40px;height:20px;background:#4c4f62;"></div>
<div class="a" style="left:717px;top:404px;width:40px;height:20px;background:#565a70;border:1px solid #8a8ea8;"></div>
<div class="a" style="left:757px;top:405px;width:1px;height:18px;background:#f0f0f0;"></div>
<div class="a" style="left:493.00px;top:56.79px;font-family:'Liberation Mono';font-size:13.33px;line-height:13.33px;color:#a9b5f2;font-weight:normal;transform:scale(1.0000,1.13);transform-origin:0 10.21px;-webkit-text-stroke:0.3px #a9b5f2;"> * </div>
<div class="a" style="left:517.00px;top:56.79px;font-family:'Liberation Mono';font-size:13.33px;line-height:13.33px;color:#ff79c6;font-weight:normal;transform:scale(1.0000,1.13);transform-origin:0 10.21px;-webkit-text-stroke:0.3px #ff79c6;">@param</div>
<div class="a" style="left:573.00px;top:56.79px;font-family:'Liberation Mono';font-size:13.33px;line-height:13.33px;color:#ffb86c;font-weight:normal;font-style:italic;transform:scale(1.0000,1.13);transform-origin:0 10.21px;-webkit-text-stroke:0.3px #ffb86c;">nsh</div>
<div class="a" style="left:597.00px;top:56.79px;font-family:'Liberation Mono';font-size:13.33px;line-height:13.33px;color:#a9b5f2;font-weight:normal;transform:scale(1.0000,1.13);transform-origin:0 10.21px;-webkit-text-stroke:0.3px #a9b5f2;">     The new documentContext value</div>
<div class="a" style="left:493.00px;top:78.79px;font-family:'Liberation Mono';font-size:13.33px;line-height:13.33px;color:#a9b5f2;font-weight:normal;transform:scale(1.0000,1.13);transform-origin:0 10.21px;-webkit-text-stroke:0.3px #a9b5f2;"> * </div>
<div class="a" style="left:517.00px;top:78.79px;font-family:'Liberation Mono';font-size:13.33px;line-height:13.33px;color:#ff79c6;font-weight:normal;transform:scale(1.0000,1.13);transform-origin:0 10.21px;-webkit-text-stroke:0.3px #ff79c6;">@param</div>
<div class="a" style="left:573.00px;top:78.79px;font-family:'Liberation Mono';font-size:13.33px;line-height:13.33px;color:#ffb86c;font-weight:normal;font-style:italic;transform:scale(1.0000,1.13);transform-origin:0 10.21px;-webkit-text-stroke:0.3px #ffb86c;">doc</div>
<div class="a" style="left:597.00px;top:78.79px;font-family:'Liberation Mono';font-size:13.33px;line-height:13.33px;color:#a9b5f2;font-weight:normal;transform:scale(1.0000,1.13);transform-origin:0 10.21px;-webkit-text-stroke:0.3px #a9b5f2;">     The new documentContext value</div>
<div class="a" style="left:493.00px;top:100.79px;font-family:'Liberation Mono';font-size:13.33px;line-height:13.33px;color:#a9b5f2;font-weight:normal;transform:scale(1.0000,1.13);transform-origin:0 10.21px;-webkit-text-stroke:0.3px #a9b5f2;"> * </div>
<div class="a" style="left:517.00px;top:100.79px;font-family:'Liberation Mono';font-size:13.33px;line-height:13.33px;color:#ff79c6;font-weight:normal;transform:scale(1.0000,1.13);transform-origin:0 10.21px;-webkit-text-stroke:0.3px #ff79c6;">@param</div>
<div class="a" style="left:573.00px;top:100.79px;font-family:'Liberation Mono';font-size:13.33px;line-height:13.33px;color:#ffb86c;font-weight:normal;font-style:italic;transform:scale(1.0000,1.13);transform-origin:0 10.21px;-webkit-text-stroke:0.3px #ffb86c;">ui</div>
<div class="a" style="left:493.00px;top:122.79px;font-family:'Liberation Mono';font-size:13.33px;line-height:13.33px;color:#a9b5f2;font-weight:normal;transform:scale(1.0000,1.13);transform-origin:0 10.21px;-webkit-text-stroke:0.3px #a9b5f2;"> */</div>
<div class="a" style="left:493.00px;top:144.79px;font-family:'Liberation Mono';font-size:13.33px;line-height:13.33px;color:#ff79c6;font-weight:normal;transform:scale(1.0000,1.13);transform-origin:0 10.21px;-webkit-text-stroke:0.3px #ff79c6;">public void </div>
<div class="a" style="left:589.00px;top:144.79px;font-family:'Liberation Mono';font-size:13.33px;line-height:13.33px;color:#50fa7b;font-weight:normal;transform:scale(1.0000,1.13);transform-origin:0 10.21px;-webkit-text-stroke:0.3px #50fa7b;">setDocumentContext</div>
<div class="a" style="left:733.00px;top:144.79px;font-family:'Liberation Mono';font-size:13.33px;line-height:13.33px;color:#f2ee2a;font-weight:normal;transform:scale(1.0000,1.13);transform-origin:0 10.21px;-webkit-text-stroke:0.3px #f2ee2a;">(</div>
<div class="a" style="left:741.00px;top:144.79px;font-family:'Liberation Mono';font-size:13.33px;line-height:13.33px;color:#8be9fd;font-weight:normal;transform:scale(1.0000,1.13);transform-origin:0 10.21px;-webkit-text-stroke:0.3px #8be9fd;">SharedContext </div>
<div class="a" style="left:853.00px;top:144.79px;font-family:'Liberation Mono';font-size:13.33px;line-height:13.33px;color:#c6c8dc;font-weight:normal;font-style:italic;transform:scale(1.0000,1.13);transform-origin:0 10.21px;-webkit-text-stroke:0.3px #c6c8dc;">context</div>
<div class="a" style="left:909.00px;top:144.79px;font-family:'Liberation Mono';font-size:13.33px;line-height:13.33px;color:#f2f2f2;font-weight:normal;transform:scale(1.0000,1.13);transform-origin:0 10.21px;-webkit-text-stroke:0.3px #f2f2f2;">, </div>
<div class="a" style="left:925.00px;top:144.79px;font-family:'Liberation Mono';font-size:13.33px;line-height:13.33px;color:#8be9fd;font-weight:normal;transform:scale(1.0000,1.13);transform-origin:0 10.21px;-webkit-text-stroke:0.3px #8be9fd;">NamespaceHandler </div>
<div class="a" style="left:1061.00px;top:144.79px;font-family:'Liberation Mono';font-size:13.33px;line-height:13.33px;color:#c6c8dc;font-weight:normal;font-style:italic;transform:scale(1.0000,1.13);transform-origin:0 10.21px;-webkit-text-stroke:0.3px #c6c8dc;">nsh</div>
<div class="a" style="left:1085.00px;top:144.79px;font-family:'Liberation Mono';font-size:13.33px;line-height:13.33px;color:#f2f2f2;font-weight:normal;transform:scale(1.0000,1.13);transform-origin:0 10.21px;-webkit-text-stroke:0.3px #f2f2f2;">, </div>
<div class="a" style="left:1101.00px;top:144.79px;font-family:'Liberation Mono';font-size:13.33px;line-height:13.33px;color:#8be9fd;font-weight:normal;transform:scale(1.0000,1.13);transform-origin:0 10.21px;-webkit-text-stroke:0.3px #8be9fd;">Document </div>
<div class="a" style="left:1173.00px;top:144.79px;font-family:'Liberation Mono';font-size:13.33px;line-height:13.33px;color:#c6c8dc;font-weight:normal;font-style:italic;transform:scale(1.0000,1.13);transform-origin:0 10.21px;-webkit-text-stroke:0.3px #c6c8dc;">doc</div>
<div class="a" style="left:1197.00px;top:144.79px;font-family:'Liberation Mono';font-size:13.33px;line-height:13.33px;color:#f2f2f2;font-weight:normal;transform:scale(1.0000,1.13);transform-origin:0 10.21px;-webkit-text-stroke:0.3px #f2f2f2;">, </div>
<div class="a" style="left:1213.00px;top:144.79px;font-family:'Liberation Mono';font-size:13.33px;line-height:13.33px;color:#8be9fd;font-weight:normal;transform:scale(1.0000,1.13);transform-origin:0 10.21px;-webkit-text-stroke:0.3px #8be9fd;">UserInterface </div>
<div class="a" style="left:1325.00px;top:144.79px;font-family:'Liberation Mono';font-size:13.33px;line-height:13.33px;color:#c6c8dc;font-weight:normal;font-style:italic;transform:scale(1.0000,1.13);transform-origin:0 10.21px;-webkit-text-stroke:0.3px #c6c8dc;">ui</div>
<div class="a" style="left:1341.00px;top:144.79px;font-family:'Liberation Mono';font-size:13.33px;line-height:13.33px;color:#f2ee2a;font-weight:normal;transform:scale(1.0000,1.13);transform-origin:0 10.21px;-webkit-text-stroke:0.3px #f2ee2a;">)</div>
<div class="a" style="left:1357.00px;top:144.79px;font-family:'Liberation Mono';font-size:13.33px;line-height:13.33px;color:#8b93f8;font-weight:normal;transform:scale(1.0000,1.13);transform-origin:0 10.21px;-webkit-text-stroke:0.3px #8b93f8;">{</div>
<div class="a" style="left:525.00px;top:166.79px;font-family:'Liberation Mono';font-size:13.33px;line-height:13.33px;color:#ffb86c;font-weight:normal;transform:scale(1.0000,1.13);transform-origin:0 10.21px;-webkit-text-stroke:0.3px #ffb86c;">_context</div>
<div class="a" style="left:589.00px;top:166.79px;font-family:'Liberation Mono';font-size:13.33px;line-height:13.33px;color:#f2f2f2;font-weight:normal;transform:scale(1.0000,1.13);transform-origin:0 10.21px;-webkit-text-stroke:0.3px #f2f2f2;"> = </div>
<div class="a" style="left:613.00px;top:166.79px;font-family:'Liberation Mono';font-size:13.33px;line-height:13.33px;color:#c6c8dc;font-weight:normal;font-style:italic;transform:scale(1.0000,1.13);transform-origin:0 10.21px;-webkit-text-stroke:0.3px #c6c8dc;">context</div>
<div class="a" style="left:669.00px;top:166.79px;font-family:'Liberation Mono';font-size:13.33px;line-height:13.33px;color:#f2f2f2;font-weight:normal;transform:scale(1.0000,1.13);transform-origin:0 10.21px;-webkit-text-stroke:0.3px #f2f2f2;">;</div>
<div class="a" style="left:525.00px;top:188.79px;font-family:'Liberation Mono';font-size:13.33px;line-height:13.33px;color:#ffb86c;font-weight:normal;transform:scale(1.0000,1.13);transform-origin:0 10.21px;-webkit-text-stroke:0.3px #ffb86c;">_nsh</div>
<div class="a" style="left:557.00px;top:188.79px;font-family:'Liberation Mono';font-size:13.33px;line-height:13.33px;color:#f2f2f2;font-weight:normal;transform:scale(1.0000,1.13);transform-origin:0 10.21px;-webkit-text-stroke:0.3px #f2f2f2;"> = </div>
<div class="a" style="left:581.00px;top:188.79px;font-family:'Liberation Mono';font-size:13.33px;line-height:13.33px;color:#c6c8dc;font-weight:normal;font-style:italic;transform:scale(1.0000,1.13);transform-origin:0 10.21px;-webkit-text-stroke:0.3px #c6c8dc;">nsh</div>
<div class="a" style="left:605.00px;top:188.79px;font-family:'Liberation Mono';font-size:13.33px;line-height:13.33px;color:#f2f2f2;font-weight:normal;transform:scale(1.0000,1.13);transform-origin:0 10.21px;-webkit-text-stroke:0.3px #f2f2f2;">;</div>
<div class="a" style="left:525.00px;top:210.79px;font-family:'Liberation Mono';font-size:13.33px;line-height:13.33px;color:#ffb86c;font-weight:normal;transform:scale(1.0000,1.13);transform-origin:0 10.21px;-webkit-text-stroke:0.3px #ffb86c;">_doc</div>
<div class="a" style="left:557.00px;top:210.79px;font-family:'Liberation Mono';font-size:13.33px;line-height:13.33px;color:#f2f2f2;font-weight:normal;transform:scale(1.0000,1.13);transform-origin:0 10.21px;-webkit-text-stroke:0.3px #f2f2f2;"> = </div>
<div class="a" style="left:581.00px;top:210.79px;font-family:'Liberation Mono';font-size:13.33px;line-height:13.33px;color:#c6c8dc;font-weight:normal;font-style:italic;transform:scale(1.0000,1.13);transform-origin:0 10.21px;-webkit-text-stroke:0.3px #c6c8dc;">doc</div>
<div class="a" style="left:605.00px;top:210.79px;font-family:'Liberation Mono';font-size:13.33px;line-height:13.33px;color:#f2f2f2;font-weight:normal;transform:scale(1.0000,1.13);transform-origin:0 10.21px;-webkit-text-stroke:0.3px #f2f2f2;">;</div>
<div class="a" style="left:525.00px;top:232.79px;font-family:'Liberation Mono';font-size:13.33px;line-height:13.33px;color:#8be9fd;font-weight:normal;transform:scale(1.0000,1.13);transform-origin:0 10.21px;-webkit-text-stroke:0.3px #8be9fd;">AttributeResolver </div>
<div class="a" style="left:669.00px;top:232.79px;font-family:'Liberation Mono';font-size:13.33px;line-height:13.33px;color:#d2d4de;font-weight:normal;transform:scale(1.0000,1.13);transform-origin:0 10.21px;-webkit-text-stroke:0.3px #d2d4de;">attRes</div>
<div class="a" style="left:717.00px;top:232.79px;font-family:'Liberation Mono';font-size:13.33px;line-height:13.33px;color:#f2f2f2;font-weight:normal;transform:scale(1.0000,1.13);transform-origin:0 10.21px;-webkit-text-stroke:0.3px #f2f2f2;"> = </div>
<div class="a" style="left:741.00px;top:232.79px;font-family:'Liberation Mono';font-size:13.33px;line-height:13.33px;color:#ff79c6;font-weight:normal;transform:scale(1.0000,1.13);transform-origin:0 10.21px;-webkit-text-stroke:0.3px #ff79c6;">new </div>
<div class="a" style="left:773.00px;top:232.79px;font-family:'Liberation Mono';font-size:13.33px;line-height:13.33px;color:#8be9fd;font-weight:normal;transform:scale(1.0000,1.13);transform-origin:0 10.21px;-webkit-text-stroke:0.3px #8be9fd;">StandardAttributeResolver</div>
<div class="a" style="left:973.00px;top:232.79px;font-family:'Liberation Mono';font-size:13.33px;line-height:13.33px;color:#f2ee2a;font-weight:normal;transform:scale(1.0000,1.13);transform-origin:0 10.21px;-webkit-text-stroke:0.3px #f2ee2a;">(</div>
<div class="a" style="left:981.00px;top:232.79px;font-family:'Liberation Mono';font-size:13.33px;line-height:13.33px;color:#ffb86c;font-weight:normal;transform:scale(1.0000,1.13);transform-origin:0 10.21px;-webkit-text-stroke:0.3px #ffb86c;">_nsh</div>
<div class="a" style="left:1013.00px;top:232.79px;font-family:'Liberation Mono';font-size:13.33px;line-height:13.33px;color:#f2f2f2;font-weight:normal;transform:scale(1.0000,1.13);transform-origin:0 10.21px;-webkit-text-stroke:0.3px #f2f2f2;">, </div>
<div class="a" style="left:1029.00px;top:232.79px;font-family:'Liberation Mono';font-size:13.33px;line-height:13.33px;color:#ffb86c;font-weight:normal;transform:scale(1.0000,1.13);transform-origin:0 10.21px;-webkit-text-stroke:0.3px #ffb86c;">_uac</div>
<div class="a" style="left:1061.00px;top:232.79px;font-family:'Liberation Mono';font-size:13.33px;line-height:13.33px;color:#f2f2f2;font-weight:normal;transform:scale(1.0000,1.13);transform-origin:0 10.21px;-webkit-text-stroke:0.3px #f2f2f2;">, </div>
<div class="a" style="left:1077.00px;top:232.79px;font-family:'Liberation Mono';font-size:13.33px;line-height:13.33px;color:#c6c8dc;font-weight:normal;font-style:italic;transform:scale(1.0000,1.13);transform-origin:0 10.21px;-webkit-text-stroke:0.3px #c6c8dc;">ui</div>
<div class="a" style="left:1093.00px;top:232.79px;font-family:'Liberation Mono';font-size:13.33px;line-height:13.33px;color:#f2ee2a;font-weight:normal;transform:scale(1.0000,1.13);transform-origin:0 10.21px;-webkit-text-stroke:0.3px #f2ee2a;">)</div>
<div class="a" style="left:1101.00px;top:232.79px;font-family:'Liberation Mono';font-size:13.33px;line-height:13.33px;color:#f2f2f2;font-weight:normal;transform:scale(1.0000,1.13);transform-origin:0 10.21px;-webkit-text-stroke:0.3px #f2f2f2;">;</div>
<div class="a" style="left:525.00px;top:276.79px;font-family:'Liberation Mono';font-size:13.33px;line-height:13.33px;color:#8be9fd;font-weight:normal;transform:scale(1.0000,1.13);transform-origin:0 10.21px;-webkit-text-stroke:0.3px #8be9fd;">List </div>
<div class="a" style="left:565.00px;top:276.79px;font-family:'Liberation Mono';font-size:13.33px;line-height:13.33px;color:#d2d4de;font-weight:normal;transform:scale(1.0000,1.13);transform-origin:0 10.21px;-webkit-text-stroke:0.3px #d2d4de;">infos</div>
<div class="a" style="left:605.00px;top:276.79px;font-family:'Liberation Mono';font-size:13.33px;line-height:13.33px;color:#f2f2f2;font-weight:normal;transform:scale(1.0000,1.13);transform-origin:0 10.21px;-webkit-text-stroke:0.3px #f2f2f2;"> = </div>
<div class="a" style="left:629.00px;top:276.79px;font-family:'Liberation Mono';font-size:13.33px;line-height:13.33px;color:#50fa7b;font-weight:normal;transform:scale(1.0000,1.13);transform-origin:0 10.21px;-webkit-text-stroke:0.3px #50fa7b;">getStylesheets</div>
<div class="a" style="left:741.00px;top:276.79px;font-family:'Liberation Mono';font-size:13.33px;line-height:13.33px;color:#f2ee2a;font-weight:normal;transform:scale(1.0000,1.13);transform-origin:0 10.21px;-webkit-text-stroke:0.3px #f2ee2a;">()</div>
<div class="a" style="left:757.00px;top:276.79px;font-family:'Liberation Mono';font-size:13.33px;line-height:13.33px;color:#f2f2f2;font-weight:normal;transform:scale(1.0000,1.13);transform-origin:0 10.21px;-webkit-text-stroke:0.3px #f2f2f2;">;</div>
<div class="a" style="left:525.00px;top:320.79px;font-family:'Liberation Mono';font-size:13.33px;line-height:13.33px;color:#ffb86c;font-weight:normal;transform:scale(1.0000,1.13);transform-origin:0 10.21px;-webkit-text-stroke:0.3px #ffb86c;">_matcher</div>
<div class="a" style="left:589.00px;top:320.79px;font-family:'Liberation Mono';font-size:13.33px;line-height:13.33px;color:#f2f2f2;font-weight:normal;transform:scale(1.0000,1.13);transform-origin:0 10.21px;-webkit-text-stroke:0.3px #f2f2f2;"> = </div>
<div class="a" style="left:613.00px;top:320.79px;font-family:'Liberation Mono';font-size:13.33px;line-height:13.33px;color:#ff79c6;font-weight:normal;transform:scale(1.0000,1.13);transform-origin:0 10.21px;-webkit-text-stroke:0.3px #ff79c6;">new </div>
<div class="a" style="left:645.00px;top:320.79px;font-family:'Liberation Mono';font-size:13.33px;line-height:13.33px;color:#8be9fd;font-weight:normal;transform:scale(1.0000,1.13);transform-origin:0 10.21px;-webkit-text-stroke:0.3px #8be9fd;">org.xhtmlrenderer.css.newmatch.Matcher</div>
<div class="a" style="left:949.00px;top:320.79px;font-family:'Liberation Mono';font-size:13.33px;line-height:13.33px;color:#f2ee2a;font-weight:normal;transform:scale(1.0000,1.13);transform-origin:0 10.21px;-webkit-text-stroke:0.3px #f2ee2a;">(</div>
<div class="a" style="left:589.00px;top:342.79px;font-family:'Liberation Mono';font-size:13.33px;line-height:13.33px;color:#ff79c6;font-weight:normal;transform:scale(1.0000,1.13);transform-origin:0 10.21px;-webkit-text-stroke:0.3px #ff79c6;">new </div>
<div class="a" style="left:621.00px;top:342.79px;font-family:'Liberation Mono';font-size:13.33px;line-height:13.33px;color:#8be9fd;font-weight:normal;transform:scale(1.0000,1.13);transform-origin:0 10.21px;-webkit-text-stroke:0.3px #8be9fd;">DOMTreeResolver</div>
<div class="a" style="left:741.00px;top:342.79px;font-family:'Liberation Mono';font-size:13.33px;line-height:13.33px;color:#f2ee2a;font-weight:normal;transform:scale(1.0000,1.13);transform-origin:0 10.21px;-webkit-text-stroke:0.3px #f2ee2a;">()</div>
<div class="a" style="left:757.00px;top:342.79px;font-family:'Liberation Mono';font-size:13.33px;line-height:13.33px;color:#f2f2f2;font-weight:normal;transform:scale(1.0000,1.13);transform-origin:0 10.21px;-webkit-text-stroke:0.3px #f2f2f2;">,</div>
<div class="a" style="left:589.00px;top:364.79px;font-family:'Liberation Mono';font-size:13.33px;line-height:13.33px;color:#d2d4de;font-weight:normal;transform:scale(1.0000,1.13);transform-origin:0 10.21px;-webkit-text-stroke:0.3px #d2d4de;">attRes</div>
<div class="a" style="left:637.00px;top:364.79px;font-family:'Liberation Mono';font-size:13.33px;line-height:13.33px;color:#f2f2f2;font-weight:normal;transform:scale(1.0000,1.13);transform-origin:0 10.21px;-webkit-text-stroke:0.3px #f2f2f2;">,</div>
<div class="a" style="left:589.00px;top:386.79px;font-family:'Liberation Mono';font-size:13.33px;line-height:13.33px;color:#ffb86c;font-weight:normal;transform:scale(1.0000,1.13);transform-origin:0 10.21px;-webkit-text-stroke:0.3px #ffb86c;">_stylesheetFactory</div>
<div class="a" style="left:733.00px;top:386.79px;font-family:'Liberation Mono';font-size:13.33px;line-height:13.33px;color:#f2f2f2;font-weight:normal;transform:scale(1.0000,1.13);transform-origin:0 10.21px;-webkit-text-stroke:0.3px #f2f2f2;">,</div>
<div class="a" style="left:589.00px;top:408.79px;font-family:'Liberation Mono';font-size:13.33px;line-height:13.33px;color:#50fa7b;font-weight:normal;transform:scale(1.0000,1.13);transform-origin:0 10.21px;-webkit-text-stroke:0.3px #50fa7b;">readAndParseAll</div>
<div class="a" style="left:709.00px;top:408.79px;font-family:'Liberation Mono';font-size:13.33px;line-height:13.33px;color:#f2ee2a;font-weight:normal;transform:scale(1.0000,1.13);transform-origin:0 10.21px;-webkit-text-stroke:0.3px #f2ee2a;">(</div>
<div class="a" style="left:717.00px;top:408.79px;font-family:'Liberation Mono';font-size:13.33px;line-height:13.33px;color:#bfc3da;font-weight:normal;transform:scale(1.0000,1.13);transform-origin:0 10.21px;-webkit-text-stroke:0.3px #bfc3da;">infos</div>
<div class="a" style="left:757.00px;top:408.79px;font-family:'Liberation Mono';font-size:13.33px;line-height:13.33px;color:#f2f2f2;font-weight:normal;transform:scale(1.0000,1.13);transform-origin:0 10.21px;-webkit-text-stroke:0.3px #f2f2f2;">, </div>
<div class="a" style="left:773.00px;top:408.79px;font-family:'Liberation Mono';font-size:13.33px;line-height:13.33px;color:#ffb86c;font-weight:normal;transform:scale(1.0000,1.13);transform-origin:0 10.21px;-webkit-text-stroke:0.3px #ffb86c;">_context</div>
<div class="a" style="left:837.00px;top:408.79px;font-family:'Liberation Mono';font-size:13.33px;line-height:13.33px;color:#f2f2f2;font-weight:normal;transform:scale(1.0000,1.13);transform-origin:0 10.21px;-webkit-text-stroke:0.3px #f2f2f2;">.</div>
<div class="a" style="left:845.00px;top:408.79px;font-family:'Liberation Mono';font-size:13.33px;line-height:13.33px;color:#50fa7b;font-weight:normal;transform:scale(1.0000,1.13);transform-origin:0 10.21px;-webkit-text-stroke:0.3px #50fa7b;">getMedia</div>
<div class="a" style="left:909.00px;top:408.79px;font-family:'Liberation Mono';font-size:13.33px;line-height:13.33px;color:#f2ee2a;font-weight:normal;transform:scale(1.0000,1.13);transform-origin:0 10.21px;-webkit-text-stroke:0.3px #f2ee2a;">())</div>
<div class="a" style="left:933.00px;top:408.79px;font-family:'Liberation Mono';font-size:13.33px;line-height:13.33px;color:#f2f2f2;font-weight:normal;transform:scale(1.0000,1.13);transform-origin:0 10.21px;-webkit-text-stroke:0.3px #f2f2f2;">,</div>
<div class="a" style="left:589.00px;top:430.79px;font-family:'Liberation Mono';font-size:13.33px;line-height:13.33px;color:#ffb86c;font-weight:normal;transform:scale(1.0000,1.13);transform-origin:0 10.21px;-webkit-text-stroke:0.3px #ffb86c;">_context</div>
<div class="a" style="left:653.00px;top:430.79px;font-family:'Liberation Mono';font-size:13.33px;line-height:13.33px;color:#f2f2f2;font-weight:normal;transform:scale(1.0000,1.13);transform-origin:0 10.21px;-webkit-text-stroke:0.3px #f2f2f2;">.</div>
<div class="a" style="left:661.00px;top:430.79px;font-family:'Liberation Mono';font-size:13.33px;line-height:13.33px;color:#50fa7b;font-weight:normal;transform:scale(1.0000,1.13);transform-origin:0 10.21px;-webkit-text-stroke:0.3px #50fa7b;">getMedia</div>
<div class="a" style="left:725.00px;top:430.79px;font-family:'Liberation Mono';font-size:13.33px;line-height:13.33px;color:#f2ee2a;font-weight:normal;transform:scale(1.0000,1.13);transform-origin:0 10.21px;-webkit-text-stroke:0.3px #f2ee2a;">())</div>
<div class="a" style="left:749.00px;top:430.79px;font-family:'Liberation Mono';font-size:13.33px;line-height:13.33px;color:#f2f2f2;font-weight:normal;transform:scale(1.0000,1.13);transform-origin:0 10.21px;-webkit-text-stroke:0.3px #f2f2f2;">;</div>
<div class="a" style="left:493.00px;top:452.79px;font-family:'Liberation Mono';font-size:13.33px;line-height:13.33px;color:#8b93f8;font-weight:normal;transform:scale(1.0000,1.13);transform-origin:0 10.21px;-webkit-text-stroke:0.3px #8b93f8;">}</div>
<div class="a" style="left:493.00px;top:496.79px;font-family:'Liberation Mono';font-size:13.33px;line-height:13.33px;color:#ff79c6;font-weight:normal;transform:scale(1.0000,1.13);transform-origin:0 10.21px;-webkit-text-stroke:0.3px #ff79c6;">private </div>
<div class="a" style="left:557.00px;top:496.79px;font-family:'Liberation Mono';font-size:13.33px;line-height:13.33px;color:#8be9fd;font-weight:normal;transform:scale(1.0000,1.13);transform-origin:0 10.21px;-webkit-text-stroke:0.3px #8be9fd;">List </div>
<div class="a" style="left:597.00px;top:496.79px;font-family:'Liberation Mono';font-size:13.33px;line-height:13.33px;color:#50fa7b;font-weight:normal;transform:scale(1.0000,1.13);transform-origin:0 10.21px;-webkit-text-stroke:0.3px #50fa7b;">readAndParseAll</div>
<div class="a" style="left:717.00px;top:496.79px;font-family:'Liberation Mono';font-size:13.33px;line-height:13.33px;color:#f2ee2a;font-weight:normal;transform:scale(1.0000,1.13);transform-origin:0 10.21px;-webkit-text-stroke:0.3px #f2ee2a;">(</div>
<div class="a" style="left:725.00px;top:496.79px;font-family:'Liberation Mono';font-size:13.33px;line-height:13.33px;color:#8be9fd;font-weight:normal;transform:scale(1.0000,1.13);transform-origin:0 10.21px;-webkit-text-stroke:0.3px #8be9fd;">List </div>
<div class="a" style="left:765.00px;top:496.79px;font-family:'Liberation Mono';font-size:13.33px;line-height:13.33px;color:#c6c8dc;font-weight:normal;font-style:italic;transform:scale(1.0000,1.13);transform-origin:0 10.21px;-webkit-text-stroke:0.3px #c6c8dc;">infos</div>
<div class="a" style="left:805.00px;top:496.79px;font-family:'Liberation Mono';font-size:13.33px;line-height:13.33px;color:#f2f2f2;font-weight:normal;transform:scale(1.0000,1.13);transform-origin:0 10.21px;-webkit-text-stroke:0.3px #f2f2f2;">, </div>
<div class="a" style="left:821.00px;top:496.79px;font-family:'Liberation Mono';font-size:13.33px;line-height:13.33px;color:#8be9fd;font-weight:normal;transform:scale(1.0000,1.13);transform-origin:0 10.21px;-webkit-text-stroke:0.3px #8be9fd;">String </div>
<div class="a" style="left:877.00px;top:496.79px;font-family:'Liberation Mono';font-size:13.33px;line-height:13.33px;color:#c6c8dc;font-weight:normal;font-style:italic;transform:scale(1.0000,1.13);transform-origin:0 10.21px;-webkit-text-stroke:0.3px #c6c8dc;">medium</div>
<div class="a" style="left:925.00px;top:496.79px;font-family:'Liberation Mono';font-size:13.33px;line-height:13.33px;color:#f2ee2a;font-weight:normal;transform:scale(1.0000,1.13);transform-origin:0 10.21px;-webkit-text-stroke:0.3px #f2ee2a;">)</div>
<div class="a" style="left:941.00px;top:496.79px;font-family:'Liberation Mono';font-size:13.33px;line-height:13.33px;color:#8b93f8;font-weight:normal;transform:scale(1.0000,1.13);transform-origin:0 10.21px;-webkit-text-stroke:0.3px #8b93f8;">{</div>
<div class="a" style="left:525.00px;top:540.79px;font-family:'Liberation Mono';font-size:13.33px;line-height:13.33px;color:#ff79c6;font-weight:normal;transform:scale(1.0000,1.13);transform-origin:0 10.21px;-webkit-text-stroke:0.3px #ff79c6;">for </div>
<div class="a" style="left:557.00px;top:540.79px;font-family:'Liberation Mono';font-size:13.33px;line-height:13.33px;color:#f2ee2a;font-weight:normal;transform:scale(1.0000,1.13);transform-origin:0 10.21px;-webkit-text-stroke:0.3px #f2ee2a;">(</div>
<div class="a" style="left:565.00px;top:540.79px;font-family:'Liberation Mono';font-size:13.33px;line-height:13.33px;color:#8be9fd;font-weight:normal;transform:scale(1.0000,1.13);transform-origin:0 10.21px;-webkit-text-stroke:0.3px #8be9fd;">Iterator </div>
<div class="a" style="left:637.00px;top:540.79px;font-family:'Liberation Mono';font-size:13.33px;line-height:13.33px;color:#d2d4de;font-weight:normal;transform:scale(1.0000,1.13);transform-origin:0 10.21px;-webkit-text-stroke:0.3px #d2d4de;">i</div>
<div class="a" style="left:645.00px;top:540.79px;font-family:'Liberation Mono';font-size:13.33px;line-height:13.33px;color:#f2f2f2;font-weight:normal;transform:scale(1.0000,1.13);transform-origin:0 10.21px;-webkit-text-stroke:0.3px #f2f2f2;"> = </div>
<div class="a" style="left:669.00px;top:540.79px;font-family:'Liberation Mono';font-size:13.33px;line-height:13.33px;color:#c6c8dc;font-weight:normal;font-style:italic;transform:scale(1.0000,1.13);transform-origin:0 10.21px;-webkit-text-stroke:0.3px #c6c8dc;">infos</div>
<div class="a" style="left:709.00px;top:540.79px;font-family:'Liberation Mono';font-size:13.33px;line-height:13.33px;color:#f2f2f2;font-weight:normal;transform:scale(1.0000,1.13);transform-origin:0 10.21px;-webkit-text-stroke:0.3px #f2f2f2;">.</div>
<div class="a" style="left:717.00px;top:540.79px;font-family:'Liberation Mono';font-size:13.33px;line-height:13.33px;color:#50fa7b;font-weight:normal;transform:scale(1.0000,1.13);transform-origin:0 10.21px;-webkit-text-stroke:0.3px #50fa7b;">iterator</div>
<div class="a" style="left:781.00px;top:540.79px;font-family:'Liberation Mono';font-size:13.33px;line-height:13.33px;color:#f2ee2a;font-weight:normal;transform:scale(1.0000,1.13);transform-origin:0 10.21px;-webkit-text-stroke:0.3px #f2ee2a;">()</div>
<div class="a" style="left:797.00px;top:540.79px;font-family:'Liberation Mono';font-size:13.33px;line-height:13.33px;color:#f2f2f2;font-weight:normal;transform:scale(1.0000,1.13);transform-origin:0 10.21px;-webkit-text-stroke:0.3px #f2f2f2;">; </div>
<div class="a" style="left:813.00px;top:540.79px;font-family:'Liberation Mono';font-size:13.33px;line-height:13.33px;color:#d2d4de;font-weight:normal;transform:scale(1.0000,1.13);transform-origin:0 10.21px;-webkit-text-stroke:0.3px #d2d4de;">i</div>
<div class="a" style="left:821.00px;top:540.79px;font-family:'Liberation Mono';font-size:13.33px;line-height:13.33px;color:#f2f2f2;font-weight:normal;transform:scale(1.0000,1.13);transform-origin:0 10.21px;-webkit-text-stroke:0.3px #f2f2f2;">.</div>
<div class="a" style="left:829.00px;top:540.79px;font-family:'Liberation Mono';font-size:13.33px;line-height:13.33px;color:#50fa7b;font-weight:normal;transform:scale(1.0000,1.13);transform-origin:0 10.21px;-webkit-text-stroke:0.3px #50fa7b;">hasNext</div>
<div class="a" style="left:885.00px;top:540.79px;font-family:'Liberation Mono';font-size:13.33px;line-height:13.33px;color:#f2ee2a;font-weight:normal;transform:scale(1.0000,1.13);transform-origin:0 10.21px;-webkit-text-stroke:0.3px #f2ee2a;">()</div>
<div class="a" style="left:901.00px;top:540.79px;font-family:'Liberation Mono';font-size:13.33px;line-height:13.33px;color:#f2f2f2;font-weight:normal;transform:scale(1.0000,1.13);transform-origin:0 10.21px;-webkit-text-stroke:0.3px #f2f2f2;">; </div>
<div class="a" style="left:917.00px;top:540.79px;font-family:'Liberation Mono';font-size:13.33px;line-height:13.33px;color:#f2ee2a;font-weight:normal;transform:scale(1.0000,1.13);transform-origin:0 10.21px;-webkit-text-stroke:0.3px #f2ee2a;">)</div>
<div class="a" style="left:933.00px;top:540.79px;font-family:'Liberation Mono';font-size:13.33px;line-height:13.33px;color:#8b93f8;font-weight:normal;transform:scale(1.0000,1.13);transform-origin:0 10.21px;-webkit-text-stroke:0.3px #8b93f8;">{</div>
<div class="a" style="left:525.00px;top:298.79px;font-family:'Liberation Mono';font-size:13.33px;line-height:13.33px;color:#8be9fd;font-weight:normal;transform:scale(1.0000,1.13);transform-origin:0 10.21px;-webkit-text-stroke:0.3px #8be9fd;">XRLog</div>
<div class="a" style="left:565.00px;top:298.79px;font-family:'Liberation Mono';font-size:13.33px;line-height:13.33px;color:#f2f2f2;font-weight:normal;transform:scale(1.0000,1.13);transform-origin:0 10.21px;-webkit-text-stroke:0.3px #f2f2f2;">.</div>
<div class="a" style="left:573.00px;top:298.79px;font-family:'Liberation Mono';font-size:13.33px;line-height:13.33px;color:#50fa7b;font-weight:normal;transform:scale(1.0000,1.13);transform-origin:0 10.21px;-webkit-text-stroke:0.3px #50fa7b;">match</div>
<div class="a" style="left:613.00px;top:298.79px;font-family:'Liberation Mono';font-size:13.33px;line-height:13.33px;color:#f2ee2a;font-weight:normal;transform:scale(1.0000,1.13);transform-origin:0 10.21px;-webkit-text-stroke:0.3px #f2ee2a;">(</div>
<div class="a" style="left:623px;top:296px;width:37px;height:17px;background:#3c3e47;border-radius:3px;"></div>
<div class="a" style="left:628.00px;top:298.84px;font-family:'Liberation Sans';font-size:12px;line-height:12px;color:#9a9ca6;font-weight:normal;transform:scale(1.0383,1.0);transform-origin:0 10.16px;">msg:</div>
<div class="a" style="left:663.00px;top:298.79px;font-family:'Liberation Mono';font-size:13.33px;line-height:13.33px;color:#f1fa8c;font-weight:normal;transform:scale(1.0000,1.13);transform-origin:0 10.21px;-webkit-text-stroke:0.3px #f1fa8c;">&quot;media = &quot;</div>
<div class="a" style="left:743.00px;top:298.79px;font-family:'Liberation Mono';font-size:13.33px;line-height:13.33px;color:#f2f2f2;font-weight:normal;transform:scale(1.0000,1.13);transform-origin:0 10.21px;-webkit-text-stroke:0.3px #f2f2f2;"> + </div>
<div class="a" style="left:767.00px;top:298.79px;font-family:'Liberation Mono';font-size:13.33px;line-height:13.33px;color:#ffb86c;font-weight:normal;transform:scale(1.0000,1.13);transform-origin:0 10.21px;-webkit-text-stroke:0.3px #ffb86c;">_context</div>
<div class="a" style="left:831.00px;top:298.79px;font-family:'Liberation Mono';font-size:13.33px;line-height:13.33px;color:#f2f2f2;font-weight:normal;transform:scale(1.0000,1.13);transform-origin:0 10.21px;-webkit-text-stroke:0.3px #f2f2f2;">.</div>
<div class="a" style="left:839.00px;top:298.79px;font-family:'Liberation Mono';font-size:13.33px;line-height:13.33px;color:#50fa7b;font-weight:normal;transform:scale(1.0000,1.13);transform-origin:0 10.21px;-webkit-text-stroke:0.3px #50fa7b;">getMedia</div>
<div class="a" style="left:903.00px;top:298.79px;font-family:'Liberation Mono';font-size:13.33px;line-height:13.33px;color:#f2ee2a;font-weight:normal;transform:scale(1.0000,1.13);transform-origin:0 10.21px;-webkit-text-stroke:0.3px #f2ee2a;">())</div>
<div class="a" style="left:927.00px;top:298.79px;font-family:'Liberation Mono';font-size:13.33px;line-height:13.33px;color:#f2f2f2;font-weight:normal;transform:scale(1.0000,1.13);transform-origin:0 10.21px;-webkit-text-stroke:0.3px #f2f2f2;">;</div>
<div class="a" style="left:525.00px;top:518.79px;font-family:'Liberation Mono';font-size:13.33px;line-height:13.33px;color:#8be9fd;font-weight:normal;transform:scale(1.0000,1.13);transform-origin:0 10.21px;-webkit-text-stroke:0.3px #8be9fd;">List </div>
<div class="a" style="left:565.00px;top:518.79px;font-family:'Liberation Mono';font-size:13.33px;line-height:13.33px;color:#d2d4de;font-weight:normal;transform:scale(1.0000,1.13);transform-origin:0 10.21px;-webkit-text-stroke:0.3px #d2d4de;">result</div>
<div class="a" style="left:613.00px;top:518.79px;font-family:'Liberation Mono';font-size:13.33px;line-height:13.33px;color:#f2f2f2;font-weight:normal;transform:scale(1.0000,1.13);transform-origin:0 10.21px;-webkit-text-stroke:0.3px #f2f2f2;"> = </div>
<div class="a" style="left:637.00px;top:518.79px;font-family:'Liberation Mono';font-size:13.33px;line-height:13.33px;color:#ff79c6;font-weight:normal;transform:scale(1.0000,1.13);transform-origin:0 10.21px;-webkit-text-stroke:0.3px #ff79c6;">new </div>
<div class="a" style="left:669.00px;top:518.79px;font-family:'Liberation Mono';font-size:13.33px;line-height:13.33px;color:#8be9fd;font-weight:normal;transform:scale(1.0000,1.13);transform-origin:0 10.21px;-webkit-text-stroke:0.3px #8be9fd;">ArrayList</div>
<div class="a" style="left:741.00px;top:518.79px;font-family:'Liberation Mono';font-size:13.33px;line-height:13.33px;color:#f2ee2a;font-weight:normal;transform:scale(1.0000,1.13);transform-origin:0 10.21px;-webkit-text-stroke:0.3px #f2ee2a;">(</div>
<div class="a" style="left:750px;top:516px;width:96px;height:17px;background:#3c3e47;border-radius:3px;"></div>
<div class="a" style="left:756.00px;top:518.84px;font-family:'Liberation Sans';font-size:12px;line-height:12px;color:#9a9ca6;font-weight:normal;transform:scale(1.1116,1.0);transform-origin:0 10.16px;">initialCapacity:</div>
<div class="a" style="left:849.00px;top:518.79px;font-family:'Liberation Mono';font-size:13.33px;line-height:13.33px;color:#c6c8dc;font-weight:normal;font-style:italic;transform:scale(1.0000,1.13);transform-origin:0 10.21px;-webkit-text-stroke:0.3px #c6c8dc;">infos</div>
<div class="a" style="left:889.00px;top:518.79px;font-family:'Liberation Mono';font-size:13.33px;line-height:13.33px;color:#f2f2f2;font-weight:normal;transform:scale(1.0000,1.13);transform-origin:0 10.21px;-webkit-text-stroke:0.3px #f2f2f2;">.</div>
<div class="a" style="left:897.00px;top:518.79px;font-family:'Liberation Mono';font-size:13.33px;line-height:13.33px;color:#50fa7b;font-weight:normal;transform:scale(1.0000,1.13);transform-origin:0 10.21px;-webkit-text-stroke:0.3px #50fa7b;">size</div>
<div class="a" style="left:929.00px;top:518.79px;font-family:'Liberation Mono';font-size:13.33px;line-height:13.33px;color:#f2ee2a;font-weight:normal;transform:scale(1.0000,1.13);transform-origin:0 10.21px;-webkit-text-stroke:0.3px #f2ee2a;">()</div>
<div class="a" style="left:945.00px;top:518.79px;font-family:'Liberation Mono';font-size:13.33px;line-height:13.33px;color:#f2f2f2;font-weight:normal;transform:scale(1.0000,1.13);transform-origin:0 10.21px;-webkit-text-stroke:0.3px #f2f2f2;"> + </div>
<div class="a" style="left:969.00px;top:518.79px;font-family:'Liberation Mono';font-size:13.33px;line-height:13.33px;color:#bd93f9;font-weight:normal;transform:scale(1.0000,1.13);transform-origin:0 10.21px;-webkit-text-stroke:0.3px #bd93f9;">15</div>
<div class="a" style="left:985.00px;top:518.79px;font-family:'Liberation Mono';font-size:13.33px;line-height:13.33px;color:#f2ee2a;font-weight:normal;transform:scale(1.0000,1.13);transform-origin:0 10.21px;-webkit-text-stroke:0.3px #f2ee2a;">)</div>
<div class="a" style="left:993.00px;top:518.79px;font-family:'Liberation Mono';font-size:13.33px;line-height:13.33px;color:#f2f2f2;font-weight:normal;transform:scale(1.0000,1.13);transform-origin:0 10.21px;-webkit-text-stroke:0.3px #f2f2f2;">;</div>
<div class="a" style="left:503px;top:264px;width:286px;height:30px;background:transparent;border:3px solid #ff0a2a;border-radius:7px;"></div>
<div class="a" style="left:576px;top:403px;width:362px;height:25px;background:transparent;border:3px solid #ff0a2a;border-radius:7px;"></div>
<div class="a" style="left:1117.00px;top:409.61px;font-family:'Liberation Sans';font-size:17px;line-height:17px;color:#ff0a2a;font-weight:normal;transform:scale(1.0849,1.0);transform-origin:0 14.39px;">content</div>
<svg class="a" style="left:0;top:0" width="1387" height="554"><path transform="translate(834.00,263) scale(0.9611111111111111)" d="M1,3.5 H17 M5.5,0.5 V6 M12.5,0.5 V6 M1.5,7.5 Q4,8.5 6,10 M5.5,8 Q5.5,14 2,17.5 M1,13.5 L6,11 M7.5,11 H17 M12.3,7 V11 Q11,15 7.5,17.5 M12.5,11.5 Q14,15 17.5,17.5 M14.5,7.5 L15.5,9" fill="none" stroke="#ff0a2a" stroke-width="1.61" stroke-linecap="square"/><path transform="translate(852.10,263) scale(0.9611111111111111)" d="M0.5,1.5 H8.5 M2.5,1.5 V15 M6.5,1.5 V17.5 M2.5,6 H6.5 M2.5,10 H6.5 M0.5,15.5 L8.5,13 M9,3.5 H16 Q15,11 9.5,17.5 M10.5,6.5 Q13,13 17.5,17" fill="none" stroke="#ff0a2a" stroke-width="1.61" stroke-linecap="square"/><path transform="translate(870.20,263) scale(0.9611111111111111)" d="M0.5,6 H6.5 M3.5,0.5 V17.5 M3.5,6.5 Q2,11 0.5,14 M3.5,8 L6.5,11 M9,0.5 L10,2.5 M16,0.5 L15,2.5 M8,4 H17 M8.5,8.5 H16.5 M7.5,12.5 H17.5 M12.5,4 V17.5" fill="none" stroke="#ff0a2a" stroke-width="1.61" stroke-linecap="square"/><path transform="translate(888.30,263) scale(0.9611111111111111)" d="M0.5,5.5 H17.5 M11,0.5 Q11.5,12 17.5,17 L17.5,13.5 M13.8,1 L15.5,3 M1.5,9.5 H9 M5.2,9.5 V15 M0.5,16 L10,13.5" fill="none" stroke="#ff0a2a" stroke-width="1.61" stroke-linecap="square"/><path transform="translate(906.40,263) scale(0.9611111111111111)" d="M9,0.3 V3.5 M1,4.5 H17 M5,4.5 Q9,14 17.5,17.5 M13,4.5 Q10,14 0.5,17.5" fill="none" stroke="#ff0a2a" stroke-width="1.61" stroke-linecap="square"/><path transform="translate(924.50,263) scale(0.9611111111111111)" d="M5,0.5 Q3,6 0.5,9 M3,5.5 V17.5 M8.5,1 Q8,4 6.5,7 M7.5,5 H16.5 M6.5,10.5 H17.5 M12,0.5 V17.5" fill="none" stroke="#ff0a2a" stroke-width="1.61" stroke-linecap="square"/><path transform="translate(967.50,408.5) scale(0.9611111111111111)" d="M3.5,0.5 L1.5,3.5 M3,1.5 H7 L5.5,3.5 M1.5,4.5 H8 V17 M1.5,4.5 V12 Q1.5,15 0.5,17.5 M1.5,8.5 H8 M1.5,12.5 H8 M4.8,4.5 V12.5 M9.5,1.5 H16 V5 Q15,7 13.5,7 M12,1.5 Q12,5 9.5,7 M9.5,10 H17 M9,14 H17.5 M13.2,7.5 V17.5 M11,7.5 L10,10" fill="none" stroke="#ff0a2a" stroke-width="1.61" stroke-linecap="square"/><path transform="translate(985.55,408.5) scale(0.9611111111111111)" d="M0.5,6 H7 M3.8,0.5 V17.5 M3.8,6.5 Q2.5,11 0.5,14 M3.8,8 L7,11 M16.5,0.5 Q13,2.5 9.5,3 V10 Q9.5,15 8,17.5 M9.5,7.5 H17.5 M13.5,7.5 V17.5" fill="none" stroke="#ff0a2a" stroke-width="1.61" stroke-linecap="square"/><path transform="translate(1003.60,408.5) scale(0.9611111111111111)" d="M0.5,6 H6.5 M3.5,0.5 V17.5 M3.5,6.5 Q2,11 0.5,14 M3.5,8 L6.5,11 M9,0.5 L10,2.5 M16,0.5 L15,2.5 M8,4 H17 M8.5,8.5 H16.5 M7.5,12.5 H17.5 M12.5,4 V17.5" fill="none" stroke="#ff0a2a" stroke-width="1.61" stroke-linecap="square"/><path transform="translate(1021.65,408.5) scale(0.9611111111111111)" d="M0.5,5.5 H17.5 M11,0.5 Q11.5,12 17.5,17 L17.5,13.5 M13.8,1 L15.5,3 M1.5,9.5 H9 M5.2,9.5 V15 M0.5,16 L10,13.5" fill="none" stroke="#ff0a2a" stroke-width="1.61" stroke-linecap="square"/><path transform="translate(1039.70,408.5) scale(0.9611111111111111)" d="M3,2 H15 M0.5,7 H17.5 M6.5,7 Q6,14 0.5,17.5 M11,7 V15.5 Q11,16.5 12.5,16.5 H17.5 V14" fill="none" stroke="#ff0a2a" stroke-width="1.61" stroke-linecap="square"/><path transform="translate(1057.75,408.5) scale(0.9611111111111111)" d="M9,0.3 V7 M2,2.5 H16 M3,5 H15 M0.5,7.5 H17.5 M9,7.5 L5,11 H12 M11,9 L5.5,14 H13.5 L12,12.5 M9,14 V17.5 M5,14.5 L2,17.5 M13,14.5 L16,17.5" fill="none" stroke="#ff0a2a" stroke-width="1.61" stroke-linecap="square"/><path transform="translate(1075.80,408.5) scale(0.9611111111111111)" d="M0.5,6.5 H5.5 M3,2 V14 M0.5,15.5 L6,13 M11.5,0.3 V4 M7,2.3 H16.5 M8,4 H15 V11.5 H8 Z M8,6.7 H15 M8,9.2 H15 M6,13 H17.5 M9.5,14.5 L7,17.5 M13.5,14.5 L17,17.5" fill="none" stroke="#ff0a2a" stroke-width="1.61" stroke-linecap="square"/><path transform="translate(1093.85,408.5) scale(0.9611111111111111)" d="M9,0.3 V2.5 M0.5,3.5 H17.5 M8,3.5 Q6,7 3.5,9.5 H14.5 M12,6 L15.5,9.5 M6.5,10.5 Q6,15 0.5,17.5 M11,10.5 V15.5 Q11,16.5 12.5,16.5 H17.5 V14" fill="none" stroke="#ff0a2a" stroke-width="1.61" stroke-linecap="square"/></svg>
</body></html>
